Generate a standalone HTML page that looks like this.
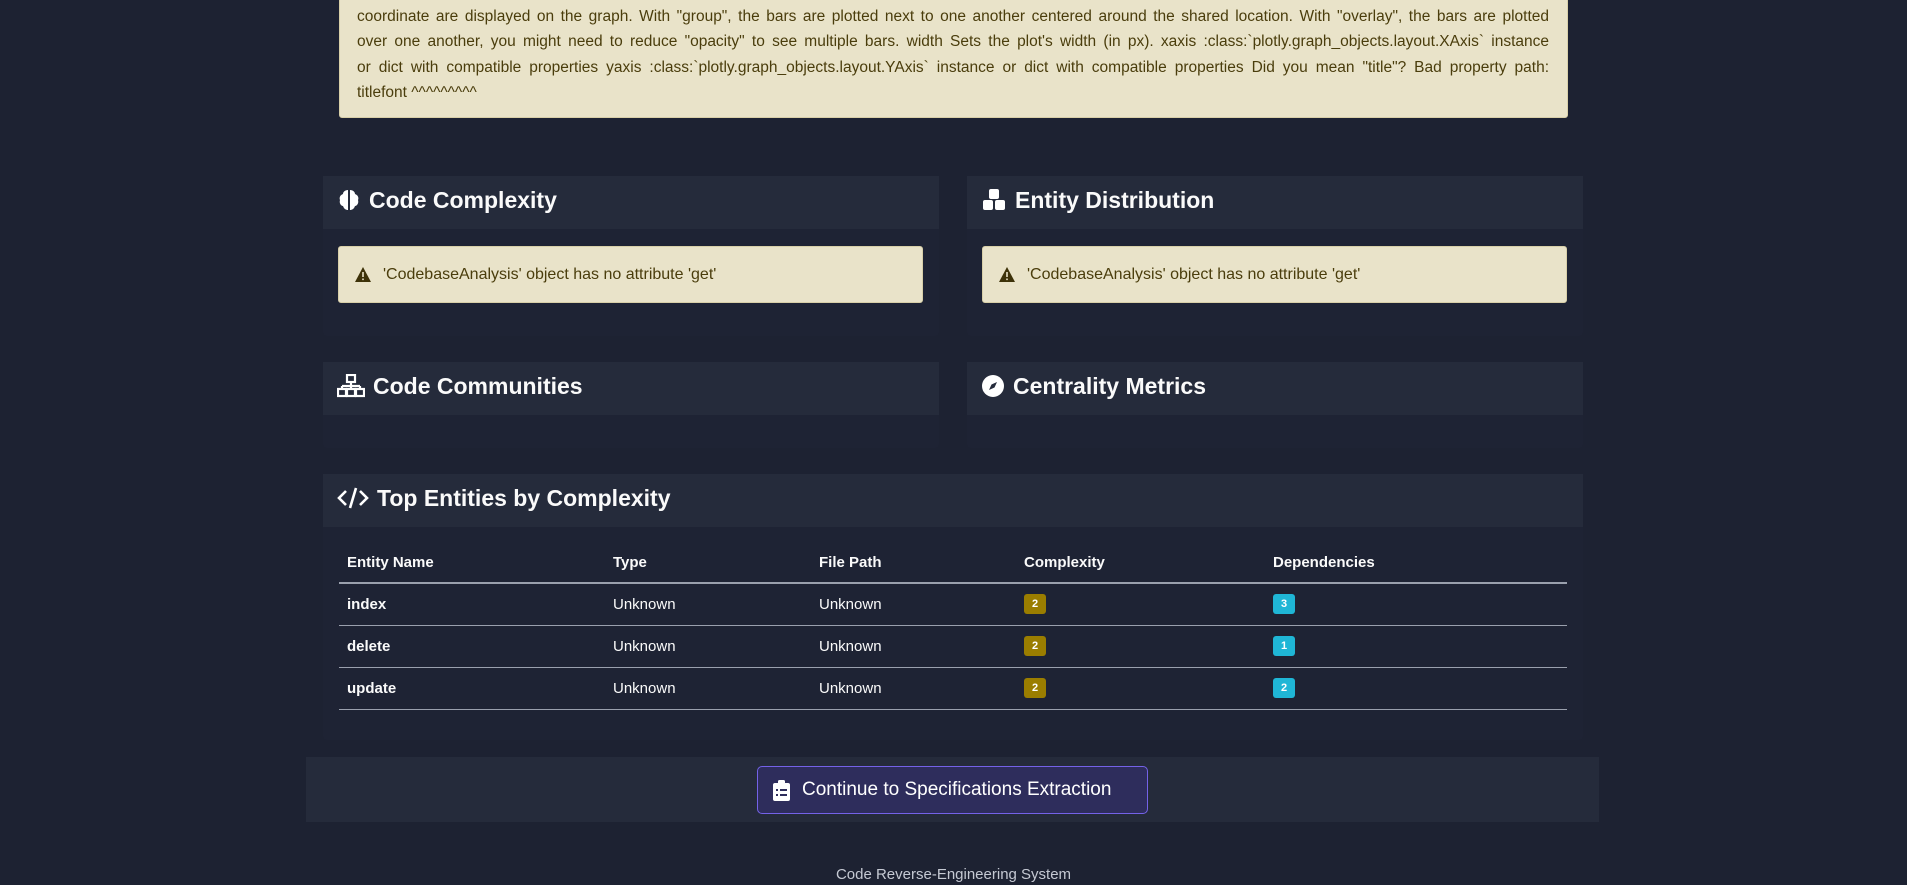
<!DOCTYPE html>
<html><head><meta charset="utf-8"><style>
*{box-sizing:border-box;margin:0;padding:0}
body{width:1907px;height:885px;overflow:hidden;background:#1d2232;font-family:"Liberation Sans",sans-serif;color:#fafafa;position:relative}
.abs{position:absolute}
.alert{background:#e9e3c9;color:#4a3d0c;border-radius:3px;border:1px solid #d8cfa8}
.ln{position:absolute;left:17px;width:1192px;font-size:15.5px;white-space:nowrap;text-align:justify;text-align-last:justify;height:20px;line-height:20px}
.card{background:#1e2334;border-radius:4px}
.hd{background:#252b3b;height:53px;display:flex;align-items:center;padding-left:14px;padding-bottom:5px;font-size:23px;font-weight:bold;color:#fafafa}
.hd svg{margin-right:8px}
.warn{position:absolute;height:57px;display:flex;align-items:center;padding-left:16px;font-size:16px}
.warn span.t{margin-left:12px}
table{border-collapse:collapse;position:absolute;left:339px;top:543px;width:1228px;font-size:15px}
th{text-align:left;font-weight:bold;height:40px;padding-left:8px;border-bottom:2px solid #9aa0ad}
td{height:42px;padding-left:8px;border-bottom:1.5px solid #9aa0ad}
td.b{font-weight:bold}
.bd{display:inline-block;width:22px;height:20px;border-radius:3px;font-size:11px;font-weight:bold;text-align:center;line-height:20px;color:#fff}
.y{background:#9a7d00}.c{background:#1fb6d6}
</style></head><body>
<div class="abs alert" style="left:339px;top:-10px;width:1229px;height:128px;overflow:hidden">
<div class="ln" style="top:-10px">bars are plotted on top of one another for each category: only the bar of the trace with the greatest value at each</div>
<div class="ln" style="top:16px">coordinate are displayed on the graph. With "group", the bars are plotted next to one another centered around the shared location. With "overlay", the bars are plotted</div>
<div class="ln" style="top:41px">over one another, you might need to reduce "opacity" to see multiple bars. width Sets the plot's width (in px). xaxis :class:`plotly.graph_objects.layout.XAxis` instance</div>
<div class="ln" style="top:67px">or dict with compatible properties yaxis :class:`plotly.graph_objects.layout.YAxis` instance or dict with compatible properties Did you mean "title"? Bad property path:</div>
<div class="ln" style="top:92px;text-align-last:left;text-align:left">titlefont ^^^^^^^^^</div>
</div>

<div class="abs card" style="left:323px;top:176px;width:616px;height:160px">
<div class="hd"><svg width="24" height="24" viewBox="0 0 24 24"><path d="M11 2C8 2 6 4 6 6 3 7 2 10 3 12 2 15 4 18 6 18 7 21 9 22 11 22Z M13 2C16 2 18 4 18 6 21 7 22 10 21 12 22 15 20 18 18 18 17 21 15 22 13 22Z" fill="#fff"/></svg>Code Complexity</div>
<div class="warn alert" style="left:15px;top:70px;width:585px"><svg width="16" height="15" viewBox="0 0 16 15"><path d="M8 0L16 15H0Z" fill="#3d3208"/><rect x="7.2" y="5" width="1.6" height="5" fill="#e9e3c9"/><rect x="7.2" y="11.5" width="1.6" height="1.6" fill="#e9e3c9"/></svg><span class="t">'CodebaseAnalysis' object has no attribute 'get'</span></div>
</div>
<div class="abs card" style="left:967px;top:176px;width:616px;height:160px">
<div class="hd"><svg width="26" height="24" viewBox="0 0 26 24"><rect x="8" y="1" width="10" height="10" rx="2" fill="#fff"/><rect x="2" y="12" width="10" height="10" rx="2" fill="#fff"/><rect x="14" y="12" width="10" height="10" rx="2" fill="#fff"/></svg>Entity Distribution</div>
<div class="warn alert" style="left:15px;top:70px;width:585px"><svg width="16" height="15" viewBox="0 0 16 15"><path d="M8 0L16 15H0Z" fill="#3d3208"/><rect x="7.2" y="5" width="1.6" height="5" fill="#e9e3c9"/><rect x="7.2" y="11.5" width="1.6" height="1.6" fill="#e9e3c9"/></svg><span class="t">'CodebaseAnalysis' object has no attribute 'get'</span></div>
</div>

<div class="abs card" style="left:323px;top:362px;width:616px;height:86px">
<div class="hd"><svg width="28" height="24" viewBox="0 0 28 24"><rect x="10" y="1" width="8" height="7" fill="none" stroke="#fff" stroke-width="2.2"/><path d="M14 8v4M5 12h18M5 12v3M23 12v3M14 12v3" stroke="#fff" stroke-width="2.2" fill="none"/><rect x="1" y="15" width="8" height="7" fill="none" stroke="#fff" stroke-width="2.2"/><rect x="19" y="15" width="8" height="7" fill="none" stroke="#fff" stroke-width="2.2"/><rect x="10" y="15" width="8" height="7" fill="none" stroke="#fff" stroke-width="2.2"/></svg>Code Communities</div>
</div>
<div class="abs card" style="left:967px;top:362px;width:616px;height:86px">
<div class="hd"><svg width="24" height="24" viewBox="0 0 24 24"><circle cx="12" cy="12" r="11" fill="#fff"/><path d="M16 8L13.5 13.5 8 16 10.5 10.5Z" fill="#252b3b"/></svg>Centrality Metrics</div>
</div>

<div class="abs card" style="left:323px;top:474px;width:1260px;height:266px">
<div class="hd"><svg width="32" height="24" viewBox="0 0 32 24"><path d="M9 5L2 12 9 19M23 5L30 12 23 19M19 2L13 22" stroke="#fff" stroke-width="2.6" fill="none"/></svg>Top Entities by Complexity</div>
</div>
<table>
<tr><th style="width:266px">Entity Name</th><th style="width:206px">Type</th><th style="width:205px">File Path</th><th style="width:249px">Complexity</th><th>Dependencies</th></tr>
<tr><td class="b">index</td><td>Unknown</td><td>Unknown</td><td><span class="bd y">2</span></td><td><span class="bd c">3</span></td></tr>
<tr><td class="b">delete</td><td>Unknown</td><td>Unknown</td><td><span class="bd y">2</span></td><td><span class="bd c">1</span></td></tr>
<tr><td class="b">update</td><td>Unknown</td><td>Unknown</td><td><span class="bd y">2</span></td><td><span class="bd c">2</span></td></tr>
</table>

<div class="abs" style="left:306px;top:757px;width:1293px;height:65px;background:#252b3b"></div>
<div class="abs" style="left:757px;top:766px;width:391px;height:48px;background:#2e2d5c;border:1.5px solid #7462e8;border-radius:5px;display:flex;align-items:center;padding-left:15px;font-size:19px;color:#fff">
<svg width="17" height="21" viewBox="0 0 17 21" style="margin-right:12px"><rect x="0" y="3" width="17" height="18" rx="2" fill="#fff"/><rect x="5" y="0" width="7" height="5" rx="1.5" fill="#fff"/><g fill="#2e2d5c"><rect x="3" y="9" width="2" height="2"/><rect x="7" y="9" width="7" height="2"/><rect x="3" y="14" width="2" height="2"/><rect x="7" y="14" width="7" height="2"/></g></svg>Continue to Specifications Extraction</div>

<div class="abs" style="left:0;width:1907px;top:866px;text-align:center;font-size:15px;color:#c5c9d3">Code Reverse-Engineering System</div>
</body></html>
